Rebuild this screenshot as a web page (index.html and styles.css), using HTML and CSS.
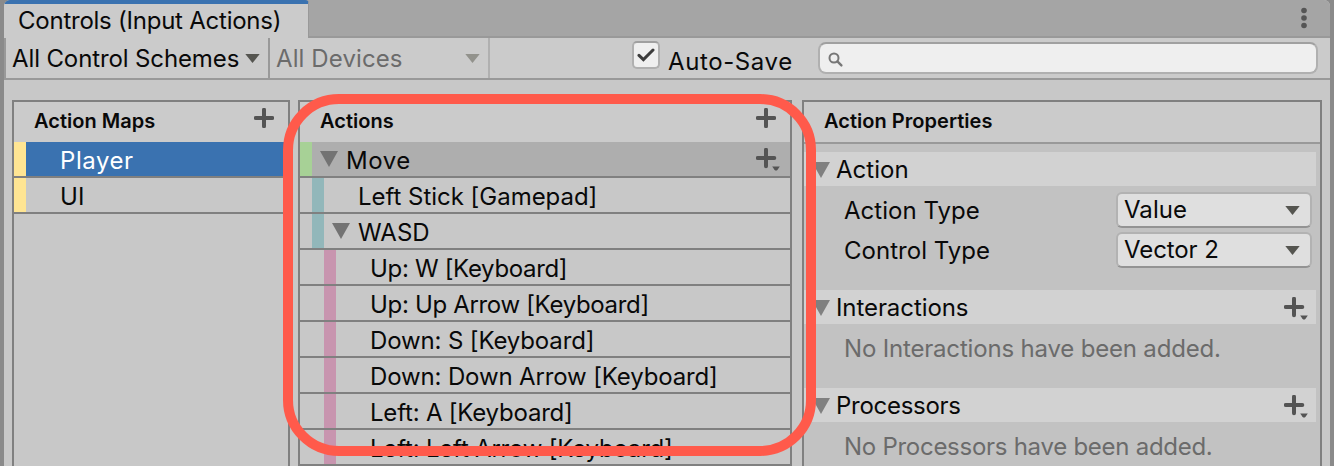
FILE: index.html
```html
<!DOCTYPE html>
<html lang="en">
<head>
<meta charset="utf-8">
<title>Controls (Input Actions)</title>
<link rel="stylesheet" href="styles.css">
</head>
<body>
<svg class="defs" width="0" height="0">
  <symbol id="plus" viewBox="0 0 20 20"><path d="M10 1.7v16.6M1.7 10h16.6" fill="none" stroke="#545454" stroke-width="4" stroke-linecap="round"/></symbol>
  <symbol id="plus-menu" viewBox="0 0 24 23"><path d="M10 1.7v16.6M1.7 10h16.6" fill="none" stroke="#545454" stroke-width="4" stroke-linecap="round"/><path d="M16.2 18.6h7.6L21.4 22q-1.4 1.2-2.8 0z" fill="#545454"/></symbol>
  <symbol id="arrow" viewBox="0 0 15 9"><path d="M.3 0h14.4L7.5 9z"/></symbol>
  <symbol id="fold" viewBox="0 0 18 16"><path d="M0 0h18L9 16z"/></symbol>
</svg>
<div class="window">
  <div class="tabbar">
    <div class="tab"><span class="t-title">Controls (Input Actions)</span></div>
    <svg class="kebab" width="6" height="22" viewBox="0 0 6 22"><circle cx="3" cy="3.5" r="2.8"/><circle cx="3" cy="11" r="2.8"/><circle cx="3" cy="18.5" r="2.8"/></svg>
  </div>
  <div class="toolbar">
    <div class="drop schemes"><span class="t-schemes">All Control Schemes</span><svg width="15" height="9"><use href="#arrow"/></svg></div>
    <div class="drop devices"><span class="t-devices">All Devices</span><svg width="15" height="9"><use href="#arrow"/></svg></div>
    <div class="check"><svg width="18" height="14" viewBox="0 0 18 14"><path d="M2 7.4l4.4 4.2L16 2" fill="none" stroke="#3c3c3c" stroke-width="3" stroke-linecap="round"/></svg></div>
    <span class="autosave">Auto-Save</span>
    <div class="search"><svg width="16" height="16" viewBox="0 0 16 16"><circle cx="6" cy="6" r="4.5" fill="none" stroke="#777" stroke-width="2"/><path d="M9.4 9.4l4 4" stroke="#777" stroke-width="2.4" stroke-linecap="round"/></svg></div>
  </div>
  <div class="panels">
    <section class="panel maps">
      <header><span>Action Maps</span><svg width="20" height="20"><use href="#plus"/></svg></header>
      <div class="row selected"><i class="yellow"></i><span class="loose">Player</span></div>
      <div class="row"><i class="yellow"></i><span>UI</span></div>
    </section>
    <section class="panel actions">
      <header><span>Actions</span><svg width="20" height="20"><use href="#plus"/></svg></header>
      <div class="row active"><i class="green"></i><svg class="fold" width="18" height="16"><use href="#fold"/></svg><span class="loose">Move</span><svg class="add" width="24" height="23"><use href="#plus-menu"/></svg></div>
      <div class="row level1"><i class="teal"></i><span class="leaf stick">Left Stick [Gamepad]</span></div>
      <div class="row level1"><i class="teal"></i><svg class="fold" width="18" height="16"><use href="#fold"/></svg><span>WASD</span></div>
      <div class="row level2"><i class="pink"></i><span class="leaf up">Up: W [Keyboard]</span></div>
      <div class="row level2"><i class="pink"></i><span class="leaf up">Up: Up Arrow [Keyboard]</span></div>
      <div class="row level2"><i class="pink"></i><span class="leaf down">Down: S [Keyboard]</span></div>
      <div class="row level2"><i class="pink"></i><span class="leaf down">Down: Down Arrow [Keyboard]</span></div>
      <div class="row level2"><i class="pink"></i><span class="leaf left">Left: A [Keyboard]</span></div>
      <div class="row level2"><i class="pink"></i><span class="leaf left">Left: Left Arrow [Keyboard]</span></div>
    </section>
    <section class="panel props">
      <header><span>Action Properties</span></header>
      <h3><svg class="fold" width="18" height="16"><use href="#fold"/></svg><span>Action</span></h3>
      <div class="field first"><span>Action Type</span><div class="select"><span>Value</span><svg width="15" height="9"><use href="#arrow"/></svg></div></div>
      <div class="field"><span>Control Type</span><div class="select"><span class="vector">Vector 2</span><svg width="15" height="9"><use href="#arrow"/></svg></div></div>
      <h3 class="inter"><svg class="fold" width="18" height="16"><use href="#fold"/></svg><span>Interactions</span><svg class="add" width="24" height="23"><use href="#plus-menu"/></svg></h3>
      <p class="no-inter">No Interactions have been added.</p>
      <h3 class="proc"><svg class="fold" width="18" height="16"><use href="#fold"/></svg><span>Processors</span><svg class="add" width="24" height="23"><use href="#plus-menu"/></svg></h3>
      <p class="no-proc">No Processors have been added.</p>
    </section>
  </div>
</div>
<div class="highlight"></div>
</body>
</html>
```
FILE: styles.css
```css
* { box-sizing: border-box; }
body {
  margin: 0;
  height: 466px;
  overflow: hidden;
  background: #8a8a8a;
  color: #090909;
  font: 370 24px/34px Inter, "Liberation Sans", sans-serif;
  letter-spacing: .03px;
  position: relative;
}
span { white-space: nowrap; }
svg { display: block; flex: none; }
.defs { position: absolute; }
.window {
  margin: 0 4px;
  height: 466px;
  overflow: hidden;
  background: #c8c8c8;
  border-radius: 6px 6px 0 0;
}
.tabbar {
  height: 38px;
  display: flex;
  justify-content: space-between;
  background: linear-gradient(#999, #999) bottom / 100% 2px no-repeat #a5a5a5;
}
.tab {
  width: 305px;
  padding: 0 0 0 14px;
  border-top: 4px solid #3a72b0;
  border-right: 1px solid #999;
  border-radius: 4px 4px 0 0;
  background: #cbcbcb;
}
.t-title { letter-spacing: -.24px; }
.kebab { margin: 7px 23px 0 0; fill: #555; }
.toolbar {
  height: 42px;
  display: flex;
  background: #cbcbcb;
  border-bottom: 2px solid #999;
  border-left: 2px solid #999;
}
.drop {
  display: flex;
  align-items: center;
  justify-content: space-between;
  border-right: 2px solid #b0b0b0;
}
.drop span { padding-top: 2px; }
.schemes { width: 264px; padding: 0 8px 0 6px; border-color: #999; fill: #555550; }
.t-schemes { letter-spacing: -.12px; }
.devices { width: 220px; padding: 0 8px 0 6px; color: #6b6b6b; fill: #92928c; }
.t-devices { letter-spacing: .1px; }
.check {
  width: 28px;
  height: 28px;
  margin: 3px 0 0 142px;
  border: 2px solid #b0b0b0;
  border-top-color: #a0a0a0;
  border-radius: 5px;
  background: #efefef;
  padding: 5px 3px;
}
.autosave { margin: 7px 0 0 8px; width: 150px; letter-spacing: .6px; }
.search {
  width: 500px;
  height: 32px;
  margin-top: 4px;
  padding: 8px 0 0 8px;
  border: 2px solid #b0b0b0;
  border-top-color: #a0a0a0;
  border-radius: 8px;
  background: #efefef;
}
.panels { display: flex; padding: 20px 8px 0; height: 390px; }
.panel { border: 2px solid #808080; }
.maps { width: 278px; margin-right: 8px; }
.actions { width: 494px; margin-right: 10px; }
.props { width: 520px; background: #c2c2c2; }
header {
  height: 40px;
  display: flex;
  justify-content: space-between;
  padding: 0 14px 0 20px;
  background: #cbcbcb;
  font-size: 20px;
  font-weight: 600;
  line-height: 38px;
  letter-spacing: .03px;
}
header svg { margin-top: 6px; }
.row {
  height: 36px;
  display: flex;
  border-bottom: 2px solid #808080;
  line-height: 38px;
}
.row i { width: 12px; height: 34px; flex: none; }
.yellow { background: #ffe593; }
.green { background: #a7d196; }
.teal { background: #92b7ba; }
.pink { background: #c895af; }
.maps .row span { margin-left: 34px; }
.selected { background: #3a72b0; color: #fff; }
.active { background: #aeaeae; }
.level1 { padding-left: 12px; }
.level2 { padding-left: 24px; }
.row .fold { margin: 9px 8px 0; }
.row .leaf { margin-left: 34px; }
.loose { letter-spacing: .55px; }
.stick { letter-spacing: -.03px; }
.up { letter-spacing: -.33px; }
.down { letter-spacing: -.14px; }
.left { letter-spacing: -.21px; }
.fold { fill: #737373; }
.row .add { margin: 6px 10px 0 auto; }
.props header { height: 42px; border-bottom: 2px solid #999; }
h3 {
  display: flex;
  height: 34px;
  margin: 8px 4px 0 0;
  padding-left: 8px;
  background: #d2d2d2;
  font-size: 24px;
  font-weight: 370;
  line-height: 35px;
}
h3 .fold { margin: 10px 6px 0 0; fill: #808080; }
h3 .add { margin: 7px 8px 0 auto; }
.inter span { letter-spacing: -.08px; }
.field {
  display: flex;
  justify-content: space-between;
  height: 36px;
  margin-top: 4px;
  padding: 0 8px 0 40px;
  line-height: 38px;
}
.first { margin-top: 6px; }
.select {
  display: flex;
  width: 196px;
  align-items: center;
  justify-content: space-between;
  padding: 0 10px 0 6px;
  border: 2px solid #b2b2b2;
  border-bottom-color: #939393;
  border-radius: 6px;
  background: #dfdfdf;
  line-height: 32px;
  fill: #555550;
}
.vector { letter-spacing: -.1px; }
.inter { margin-top: 22px; }
.proc { margin-top: 14px; }
.proc span { letter-spacing: -.28px; }
p { margin: 0; padding: 0 0 0 40px; height: 50px; line-height: 50px; color: #6b6b6b; white-space: nowrap; }
.no-inter { letter-spacing: -.18px; }
.no-proc { letter-spacing: -.27px; }
.highlight {
  position: absolute;
  left: 283px;
  top: 94px;
  width: 533px;
  height: 362px;
  border: 10px solid #ff5a4b;
  border-radius: 56px;
}
```
